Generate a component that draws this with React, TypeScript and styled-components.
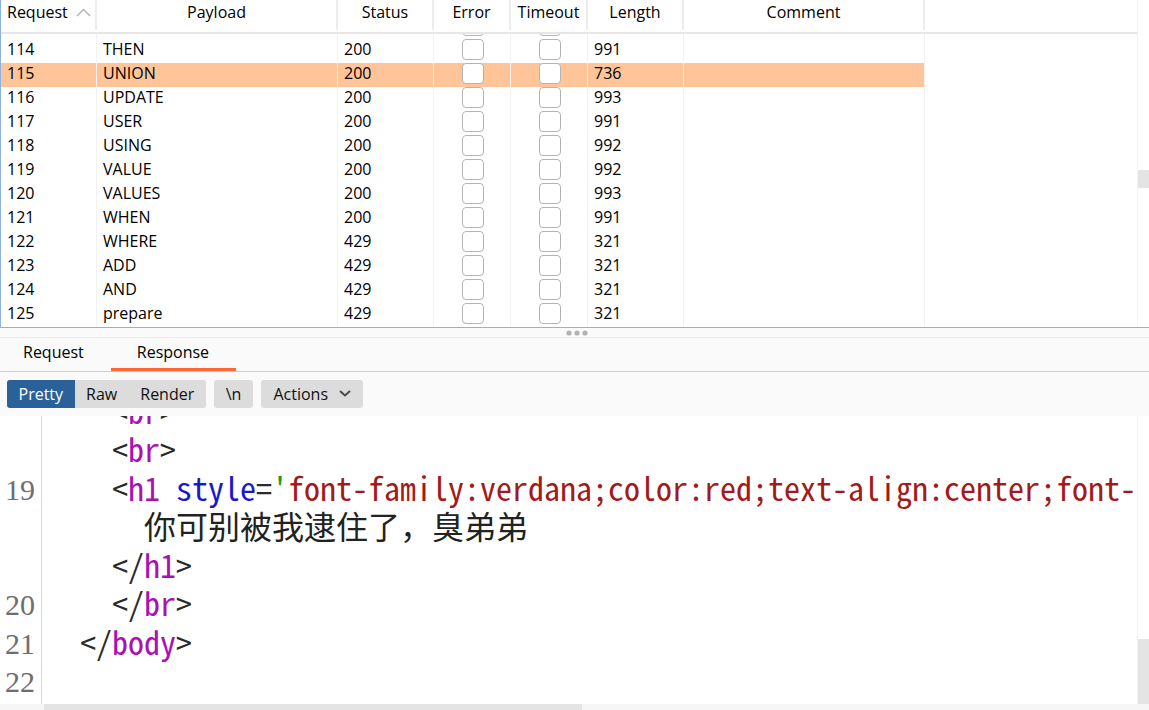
import React from 'react';
import styled, { createGlobalStyle } from 'styled-components';

const GlobalStyle = createGlobalStyle`
  html, body { margin: 0; padding: 0; background: #ffffff; }
  body { font-family: "Open Sans", "Noto Sans", sans-serif; color: #000; }
`;

const rows = [
  { id: 114, payload: 'THEN', status: '200', length: '991' },
  { id: 115, payload: 'UNION', status: '200', length: '736', selected: true },
  { id: 116, payload: 'UPDATE', status: '200', length: '993' },
  { id: 117, payload: 'USER', status: '200', length: '991' },
  { id: 118, payload: 'USING', status: '200', length: '992' },
  { id: 119, payload: 'VALUE', status: '200', length: '992' },
  { id: 120, payload: 'VALUES', status: '200', length: '993' },
  { id: 121, payload: 'WHEN', status: '200', length: '991' },
  { id: 122, payload: 'WHERE', status: '429', length: '321' },
  { id: 123, payload: 'ADD', status: '429', length: '321' },
  { id: 124, payload: 'AND', status: '429', length: '321' },
  { id: 125, payload: 'prepare', status: '429', length: '321' },
];

const columns = '96px 241px 96px 77px 77px 96px 241px';

const Page = styled.div`
  width: 1149px;
  height: 710px;
  display: flex;
  flex-direction: column;
  overflow: hidden;
  background: #fafafa;
`;

const TablePane = styled.div`
  height: 327px;
  display: flex;
  border-left: 1px solid #8fb3e0;
  border-bottom: 1px solid #8fb3e0;
  background: #fff;
`;

const TableMain = styled.div`
  flex: 1;
  display: flex;
  flex-direction: column;
  overflow: hidden;
`;

const HeaderRow = styled.div`
  height: 32px;
  flex: none;
  display: grid;
  grid-template-columns: ${columns};
  border-bottom: 2px solid #e6e6e6;
  background: #fff;
`;

const HeaderCell = styled.div<{ $left?: boolean }>`
  display: flex;
  align-items: center;
  justify-content: ${(p) => (p.$left ? 'flex-start' : 'center')};
  padding: 0 0 6px ${(p) => (p.$left ? '6px' : '0')};
  height: 30px;
  font-size: 16px;
  border-right: 2px solid #ececec;
  box-sizing: border-box;
  gap: 8px;
`;

const Body = styled.div`
  flex: 1;
  overflow: hidden;
`;

const BodyInner = styled.div`
  margin-top: -19px;
`;

const Row = styled.div<{ $selected?: boolean }>`
  display: grid;
  grid-template-columns: ${columns};
  height: 24px;
  background: ${(p) => (p.$selected ? '#ffc599' : 'transparent')};
  width: 924px;
`;

const Cell = styled.div`
  height: 24px;
  box-sizing: border-box;
  padding: 0 0 4px 6px;
  line-height: 20px;
  font-size: 16px;
  border-right: 1px solid #f2f2f2;
  white-space: nowrap;
  overflow: hidden;
`;

const CheckCell = styled.div`
  height: 24px;
  display: flex;
  justify-content: center;
  padding-left: 2px;
  border-right: 1px solid #f2f2f2;
`;

const Check = styled.div`
  width: 22px;
  height: 21px;
  box-sizing: border-box;
  border: 1.5px solid #b4b4b4;
  border-radius: 4px;
  background: #fff;
`;

const VScroll = styled.div<{ $thumbTop: number; $thumbHeight: number }>`
  width: 12px;
  flex: none;
  position: relative;
  background: #fff;
  border-left: 1px solid #f3f3f3;
  box-sizing: border-box;
  &::after {
    content: '';
    position: absolute;
    left: 0;
    right: 0;
    top: ${(p) => p.$thumbTop}px;
    height: ${(p) => p.$thumbHeight}px;
    background: #e4e4e4;
  }
`;

const Divider = styled.div`
  height: 9px;
  flex: none;
  display: flex;
  justify-content: center;
  align-items: center;
  padding-left: 5px;
  border-bottom: 1px solid #ebebf0;
  background: #fafafa;
`;

const Tabs = styled.div`
  height: 33px;
  flex: none;
  display: flex;
  border-bottom: 1px solid #cdcdcd;
  background: #fafafa;
`;

const Tab = styled.div<{ $active?: boolean }>`
  padding: ${(p) => (p.$active ? '0 27px 0 26px' : '0 27px 0 23px')};
  font-size: 16px;
  line-height: 28px;
  border-bottom: 3px solid ${(p) => (p.$active ? '#ff6633' : 'transparent')};
  box-sizing: border-box;
  height: 33px;
`;

const Toolbar = styled.div`
  height: 44px;
  flex: none;
  box-sizing: border-box;
  padding: 8px 7px;
  display: flex;
  gap: 8px;
  background: #fafafa;
`;

const ButtonGroup = styled.div`
  display: flex;
  border-radius: 3px;
  overflow: hidden;
  background: #dcdcdc;
`;

const ToolButton = styled.div<{ $active?: boolean; $solo?: boolean }>`
  height: 28px;
  padding: 0 ${(p) => (p.$solo ? '12px' : '11.5px')};
  display: flex;
  align-items: center;
  gap: 11px;
  font-size: 16px;
  color: ${(p) => (p.$active ? '#fff' : '#111')};
  background: ${(p) => (p.$active ? '#2a6199' : '#dcdcdc')};
  border-radius: ${(p) => (p.$solo ? '3px' : '0')};
  padding-bottom: 1px;
  box-sizing: border-box;
`;

const Editor = styled.div`
  flex: 1;
  display: flex;
  background: #fff;
  overflow: hidden;
`;

const Lines = styled.div`
  flex: 1;
  overflow: hidden;
`;

const LinesInner = styled.div`
  margin-top: -22.5px;
`;

const Line = styled.div`
  display: flex;
  height: 38.5px;
`;

const LineNo = styled.div`
  width: 42px;
  flex: none;
  border-right: 1px solid #d9d9d9;
  box-sizing: border-box;
  padding-left: 5px;
  font-family: "Liberation Serif", "DejaVu Serif", serif;
  font-size: 30px;
  line-height: 38.5px;
  color: #6e6e6e;
`;

const Code = styled.div`
  padding-left: 6px;
  padding-bottom: 6px;
  white-space: pre;
  font-family: "Noto Sans Mono CJK SC", "Noto Sans CJK SC", "DejaVu Sans Mono", monospace;
  font-size: 32px;
  line-height: 32.5px;
  color: #222;
`;

const Punct = styled.span`
  color: #2a2a2a;
`;
const Tag = styled.span`
  color: #a811b4;
`;
const Attr = styled.span`
  color: #1818cc;
`;
const Quote = styled.span`
  color: #14a014;
`;
const Value = styled.span`
  color: #a31a1a;
`;

const HScroll = styled.div`
  height: 6px;
  flex: none;
  display: flex;
  background: #f6f6f6;
`;

const HThumb = styled.div`
  margin-left: 44px;
  width: 538px;
  background: #e4e4e4;
`;

const SortCaret = () => (
  <svg width="15" height="9" viewBox="0 0 15 9">
    <polyline points="1,8 7.5,1.5 14,8" fill="none" stroke="#b0b0b0" strokeWidth="1.3" />
  </svg>
);

const Chevron = () => (
  <svg width="12" height="7" viewBox="0 0 12 7">
    <polyline points="1,1 6,5.5 11,1" fill="none" stroke="#4a4a4a" strokeWidth="2" />
  </svg>
);

const Grip = () => (
  <svg width="22" height="6" viewBox="0 0 22 6">
    <circle cx="3" cy="3" r="2.6" fill="#b3b3b3" />
    <circle cx="11" cy="3" r="2.6" fill="#b3b3b3" />
    <circle cx="19" cy="3" r="2.6" fill="#b3b3b3" />
  </svg>
);

const OpenTag = ({ name }: { name: string }) => (
  <>
    <Punct>&lt;</Punct>
    <Tag>{name}</Tag>
    <Punct>&gt;</Punct>
  </>
);

const CloseTag = ({ name }: { name: string }) => (
  <>
    <Punct>&lt;/</Punct>
    <Tag>{name}</Tag>
    <Punct>&gt;</Punct>
  </>
);

export default function App() {
  return (
    <Page>
      <GlobalStyle />
      <TablePane>
        <TableMain>
          <HeaderRow>
            <HeaderCell $left>
              Request <SortCaret />
            </HeaderCell>
            <HeaderCell>Payload</HeaderCell>
            <HeaderCell>Status</HeaderCell>
            <HeaderCell>Error</HeaderCell>
            <HeaderCell>Timeout</HeaderCell>
            <HeaderCell>Length</HeaderCell>
            <HeaderCell>Comment</HeaderCell>
          </HeaderRow>
          <Body>
            <BodyInner>
              {/* row scrolled almost out of view: only the checkbox edges show */}
              <Row>
                <Cell />
                <Cell />
                <Cell />
                <CheckCell>
                  <Check />
                </CheckCell>
                <CheckCell>
                  <Check />
                </CheckCell>
                <Cell />
                <Cell />
              </Row>
              {rows.map((r) => (
                <Row key={r.id} $selected={r.selected}>
                  <Cell>{r.id}</Cell>
                  <Cell>{r.payload}</Cell>
                  <Cell>{r.status}</Cell>
                  <CheckCell>
                    <Check />
                  </CheckCell>
                  <CheckCell>
                    <Check />
                  </CheckCell>
                  <Cell>{r.length}</Cell>
                  <Cell />
                </Row>
              ))}
            </BodyInner>
          </Body>
        </TableMain>
        <VScroll $thumbTop={170} $thumbHeight={18} />
      </TablePane>

      <Divider>
        <Grip />
      </Divider>

      <Tabs>
        <Tab>Request</Tab>
        <Tab $active>Response</Tab>
      </Tabs>

      <Toolbar>
        <ButtonGroup>
          <ToolButton $active>Pretty</ToolButton>
          <ToolButton>Raw</ToolButton>
          <ToolButton>Render</ToolButton>
        </ButtonGroup>
        <ToolButton $solo>\n</ToolButton>
        <ToolButton $solo>
          Actions <Chevron />
        </ToolButton>
      </Toolbar>

      <Editor>
        <Lines>
          <LinesInner>
            <Line>
              <LineNo />
              <Code>{'    '}<OpenTag name="br" /></Code>
            </Line>
            <Line>
              <LineNo />
              <Code>{'    '}<OpenTag name="br" /></Code>
            </Line>
            <Line>
              <LineNo>19</LineNo>
              <Code>
                {'    '}
                <Punct>&lt;</Punct>
                <Tag>h1</Tag> <Attr>style</Attr>
                <Punct>=</Punct>
                <Quote>'</Quote>
                <Value>font-family:verdana;color:red;text-align:center;font-size:40px;</Value>
                <Quote>'</Quote>
                <Punct>&gt;</Punct>
              </Code>
            </Line>
            <Line>
              <LineNo />
              <Code>{'      '}你可别被我逮住了，臭弟弟</Code>
            </Line>
            <Line>
              <LineNo />
              <Code>{'    '}<CloseTag name="h1" /></Code>
            </Line>
            <Line>
              <LineNo>20</LineNo>
              <Code>{'    '}<CloseTag name="br" /></Code>
            </Line>
            <Line>
              <LineNo>21</LineNo>
              <Code>{'  '}<CloseTag name="body" /></Code>
            </Line>
            <Line>
              <LineNo>22</LineNo>
              <Code />
            </Line>
            <Line>
              <LineNo />
              <Code />
            </Line>
          </LinesInner>
        </Lines>
        <VScroll $thumbTop={223} $thumbHeight={65} />
      </Editor>

      <HScroll>
        <HThumb />
      </HScroll>
    </Page>
  );
}
